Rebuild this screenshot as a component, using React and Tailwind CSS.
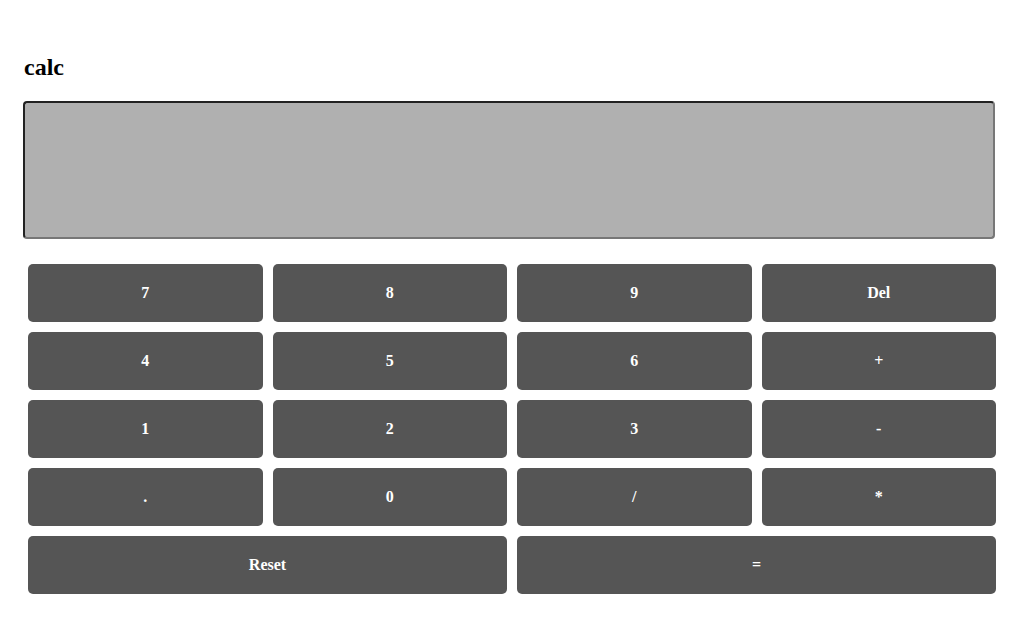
import React from 'react';

const keys = ['7', '8', '9', 'Del', '4', '5', '6', '+', '1', '2', '3', '-', '.', '0', '/', '*'];

export default function App() {
  return (
    <div className="min-h-screen bg-white pt-[51px] font-['Liberation_Serif',serif] text-black">
      <h2 className="ml-[24px] text-[24px] leading-[32px] font-bold">calc</h2>

      {/* display */}
      <div className="ml-[23px] mt-[18px] h-[138px] w-[972px] rounded-[4px] border-2 border-t-[#222] border-l-[#222] border-r-[#777] border-b-[#777] bg-[#b0b0b0]" />

      {/* keypad */}
      <div className="ml-[28px] mt-[25px] grid w-[968px] grid-cols-4 gap-[10px]">
        {keys.map((k) => (
          <Key key={k} label={k} />
        ))}
        <Key label="Reset" wide />
        <Key label="=" wide />
      </div>
    </div>
  );
}

function Key({ label, wide }) {
  return (
    <button
      className={
        wide
          ? 'col-span-2 h-[58px] rounded-[5px] bg-[#555555] text-[16px] font-bold text-white'
          : 'h-[58px] rounded-[5px] bg-[#555555] text-[16px] font-bold text-white'
      }
    >
      {label}
    </button>
  );
}
